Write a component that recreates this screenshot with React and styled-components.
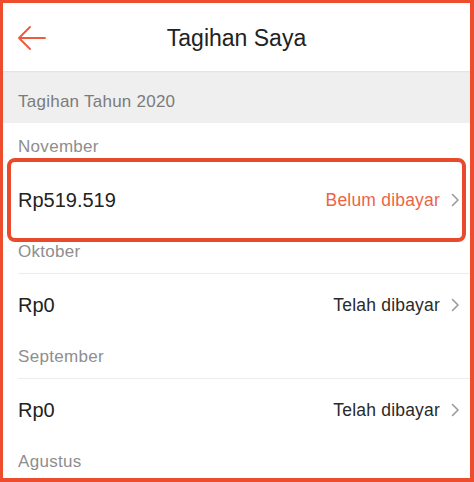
import React from 'react'
import styled, { createGlobalStyle } from 'styled-components'

const GlobalStyle = createGlobalStyle`
  html, body {
    margin: 0;
    padding: 0;
    background: #ffffff;
  }
  * {
    box-sizing: border-box;
  }
`

// last month is only partly in view, so it has no row yet
const bills = [
  { month: 'November', amount: 'Rp519.519', status: 'Belum dibayar', unpaid: true },
  { month: 'Oktober', amount: 'Rp0', status: 'Telah dibayar' },
  { month: 'September', amount: 'Rp0', status: 'Telah dibayar' },
  { month: 'Agustus' },
]

function BackArrow() {
  return (
    <svg width="30" height="26" viewBox="0 0 30 26" fill="none">
      <path d="M28 13H2M13 2L2 13l11 11" stroke="#ee5a3c" strokeWidth="1.9" strokeLinecap="round" strokeLinejoin="round" />
    </svg>
  )
}

function Chevron() {
  return (
    <svg width="10" height="14" viewBox="0 0 10 14" fill="none">
      <path d="M2.5 1.5L8 7l-5.5 5.5" stroke="#9a9a9a" strokeWidth="1.6" strokeLinecap="round" strokeLinejoin="round" />
    </svg>
  )
}

function App() {
  return (
    <>
      <GlobalStyle />
      <Frame>
        <Header>
          <BackButton><BackArrow /></BackButton>
          <Title>Tagihan Saya</Title>
        </Header>

        <YearBar>Tagihan Tahun 2020</YearBar>

        <List>
          {bills.map((b, i) => (
            <Group key={b.month}>
              <MonthLabel>{b.month}</MonthLabel>
              {b.amount && (
                <Row first={i === 0}>
                  <Amount>{b.amount}</Amount>
                  <Status unpaid={b.unpaid}>{b.status}</Status>
                  <Chevron />
                  {b.unpaid && <Highlight />}
                </Row>
              )}
            </Group>
          ))}
        </List>
      </Frame>
    </>
  )
}

export default App

const Frame = styled.div`
  width: 474px;
  height: 482px;
  overflow: hidden;
  border-style: solid;
  border-color: #ee4d2d;
  border-width: 3px 4px 4px 3px;
  background: #fff;
  font-family: "Liberation Sans", Arial, sans-serif;
  display: flex;
  flex-direction: column;
`

const Header = styled.div`
  position: relative;
  height: 68px;
  flex-shrink: 0;
  display: flex;
  align-items: center;
  justify-content: center;
  background: #fff;
`

const BackButton = styled.div`
  position: absolute;
  left: 14px;
  top: 22px;
  display: flex;
`

const Title = styled.h1`
  margin: 0;
  font-size: 23px;
  font-weight: 400;
  color: #222;
  padding-top: 2px;
`

const YearBar = styled.div`
  height: 52px;
  flex-shrink: 0;
  display: flex;
  align-items: center;
  padding: 9px 15px 0;
  background: #efefef;
  box-shadow: inset 0 2px 2px -1px rgba(0, 0, 0, 0.06);
  color: #7b7b7b;
  font-size: 17px;
  letter-spacing: 0.25px;
`

const List = styled.div`
  display: flex;
  flex-direction: column;
  padding-left: 15px;
`

const Group = styled.div`
  display: flex;
  flex-direction: column;
`

const MonthLabel = styled.div`
  height: 45px;
  display: flex;
  align-items: center;
  padding-top: 3px;
  color: #8e8e8e;
  font-size: 17px;
  letter-spacing: 0.3px;
`

const Row = styled.div`
  position: relative;
  height: 60px;
  display: flex;
  align-items: center;
  gap: 10px;
  padding: 3px 10px 0 0;
  border-top: 1px solid ${p => (p.first ? 'transparent' : '#ececec')};
`

const Amount = styled.div`
  flex: 1;
  font-size: 20px;
  color: #222;
`

const Status = styled.div`
  font-size: 17.5px;
  letter-spacing: 0.2px;
  color: ${p => (p.unpaid ? '#ec6446' : '#2a2a2a')};
`

const Highlight = styled.div`
  position: absolute;
  top: -11px;
  bottom: -14px;
  left: -11px;
  right: 4px;
  border: 4px solid #ea4a2c;
  border-radius: 8px;
  pointer-events: none;
`
